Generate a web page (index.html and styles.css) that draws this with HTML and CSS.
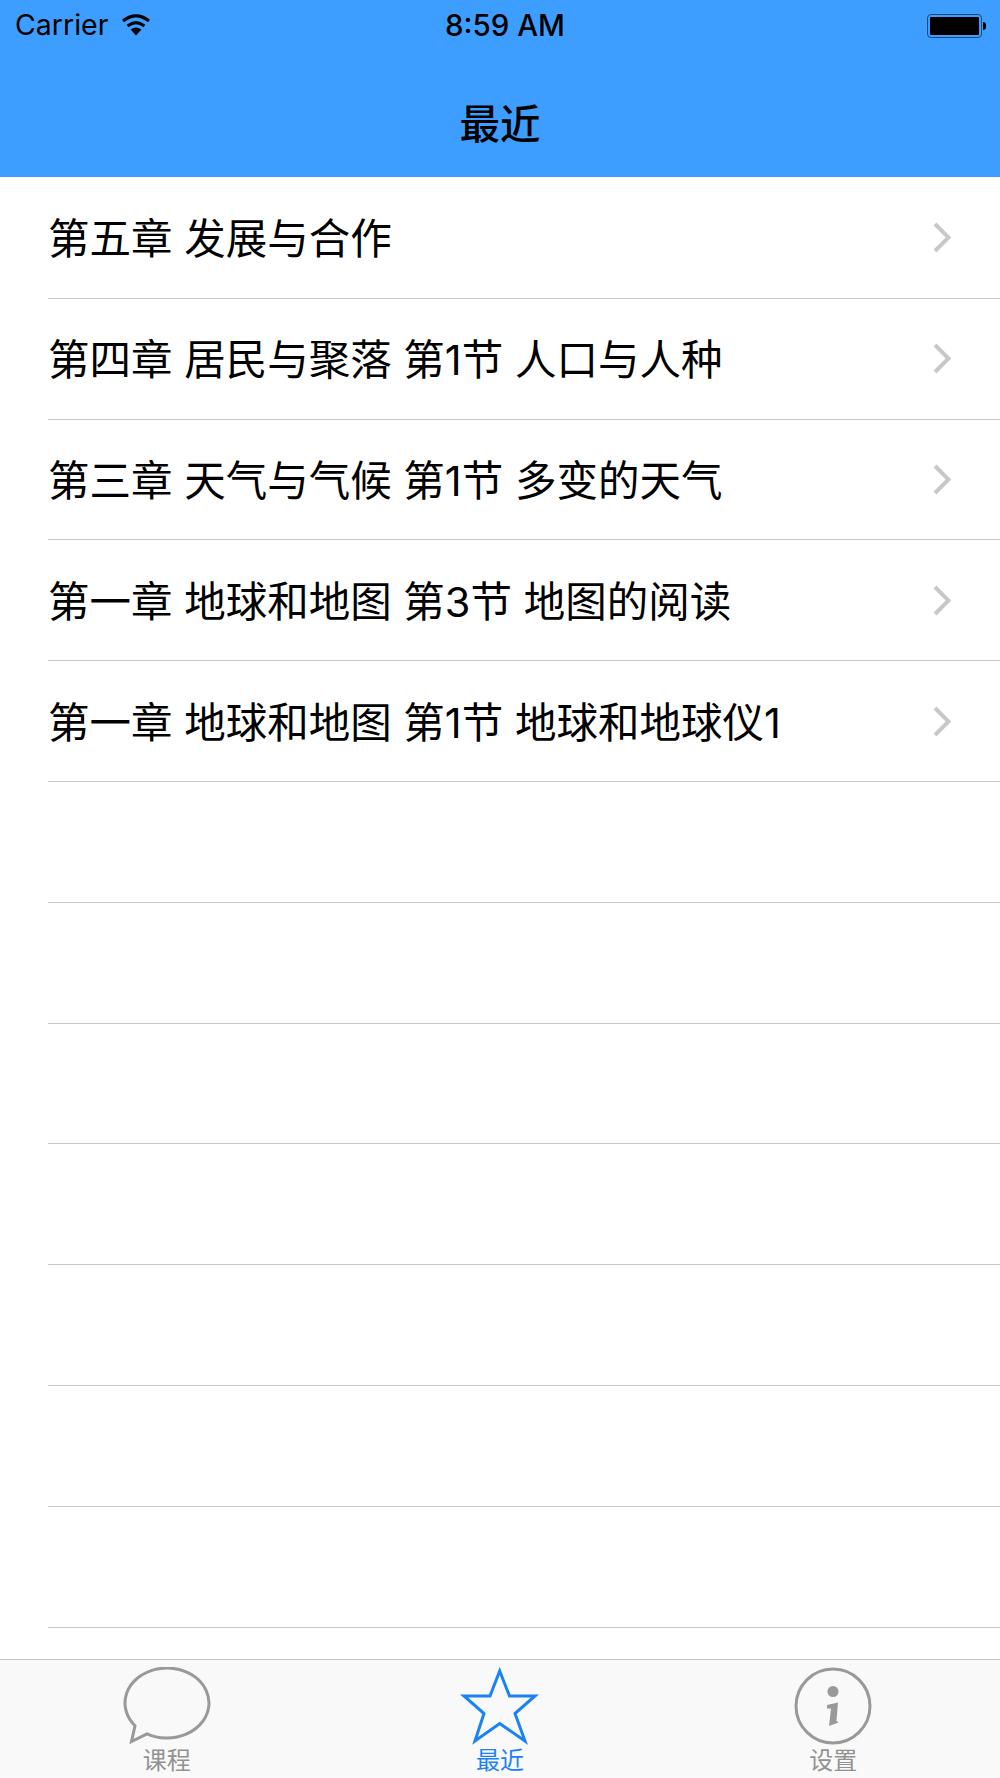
FILE: index.html
```html
<!DOCTYPE html>
<html lang="zh-CN">
<head>
<meta charset="UTF-8">
<title>最近</title>
    <link rel="stylesheet" href="styles.css">
</head>
<body>
<div class="app">
    <header class="header">
        <div class="status">
            <div class="status-left">
                <span>Carrier</span>
                <svg class="wifi" viewBox="0 0 30 22" width="30" height="22">
                    <path d="M15 21.5 L9.6 15.6 Q15 11.6 20.4 15.6 Z" fill="#000"/>
                    <path d="M6.6 12 Q15 5.4 23.4 12" fill="none" stroke="#000" stroke-width="3.2"/>
                    <path d="M2 7 Q15 -3.2 28 7" fill="none" stroke="#000" stroke-width="3.2"/>
                </svg>
            </div>
            <div class="status-time">8:59 AM</div>
            <div class="status-right">
                <div class="battery"><div class="battery-fill"></div></div>
                <div class="battery-nub"></div>
            </div>
        </div>
        <h1 class="title">最近</h1>
    </header>

    <ul class="list">
        <li class="row"><span class="row-text">第五章 发展与合作</span><svg class="chevron" viewBox="0 0 18 31" width="18" height="31"><path d="M2 2 L15.5 15.5 L2 29" fill="none" stroke="#c7c7cc" stroke-width="4"/></svg></li>
        <li class="row"><span class="row-text">第四章 居民与聚落 第1节 人口与人种</span><svg class="chevron" viewBox="0 0 18 31" width="18" height="31"><path d="M2 2 L15.5 15.5 L2 29" fill="none" stroke="#c7c7cc" stroke-width="4"/></svg></li>
        <li class="row"><span class="row-text">第三章 天气与气候 第1节 多变的天气</span><svg class="chevron" viewBox="0 0 18 31" width="18" height="31"><path d="M2 2 L15.5 15.5 L2 29" fill="none" stroke="#c7c7cc" stroke-width="4"/></svg></li>
        <li class="row"><span class="row-text">第一章 地球和地图 第3节 地图的阅读</span><svg class="chevron" viewBox="0 0 18 31" width="18" height="31"><path d="M2 2 L15.5 15.5 L2 29" fill="none" stroke="#c7c7cc" stroke-width="4"/></svg></li>
        <li class="row"><span class="row-text">第一章 地球和地图 第1节 地球和地球仪1</span><svg class="chevron" viewBox="0 0 18 31" width="18" height="31"><path d="M2 2 L15.5 15.5 L2 29" fill="none" stroke="#c7c7cc" stroke-width="4"/></svg></li>
        <li class="row"></li>
        <li class="row"></li>
        <li class="row"></li>
        <li class="row"></li>
        <li class="row"></li>
        <li class="row"></li>
        <li class="row"></li>
    </ul>

    <nav class="tabbar">
        <div class="tab">
            <svg class="tab-icon" viewBox="0 0 88 78" width="88" height="78">
                <path d="M12 58.7 A42 35 0 1 1 24 66.8 L8.5 74.5 Z" fill="none" stroke="#999" stroke-width="3"/>
            </svg>
            <span class="tab-label">课程</span>
        </div>
        <div class="tab tab-active">
            <svg class="tab-icon" viewBox="0 0 80 78" width="80" height="78">
                <path d="M39.7 4 L49.5 29 L75 29 L55 46.5 L65 74 L39.7 56.5 L15 74 L24 46.5 L4 29 L30 29 Z" fill="none" stroke="#1b82f6" stroke-width="3"/>
            </svg>
            <span class="tab-label">最近</span>
        </div>
        <div class="tab">
            <svg class="tab-icon" viewBox="0 0 78 78" width="78" height="78">
                <circle cx="39" cy="39" r="37" fill="none" stroke="#999" stroke-width="3"/>
                <circle cx="39" cy="24.5" r="5.5" fill="#999"/>
                <path d="M33 38 L44 35.5 L42.5 54 L44.5 55.5 L35 59 L37 41.5 L33 41.5 Z" fill="#999"/>
            </svg>
            <span class="tab-label">设置</span>
        </div>
    </nav>
</div>
</body>
</html>
```

FILE: styles.css
```css
html, body {
  margin: 0;
  padding: 0;
}
body {
  font-family: 'Inter', 'Noto Sans CJK SC', sans-serif;
  background-color: #fff;
  color: #000;
}
.app {
  display: flex;
  flex-direction: column;
  width: 1000px;
  height: 1778px;
  overflow: hidden;
}

/* header */
.header {
  flex: none;
  height: 177px;
  background-color: #3d9eff;
  display: flex;
  flex-direction: column;
}
.status {
  height: 53px;
  box-sizing: border-box;
  padding: 0 14px 4px 15px;
  display: grid;
  grid-template-columns: 1fr auto 1fr;
  align-items: center;
  font-size: 28.5px;
}
.status-left {
  display: flex;
  align-items: center;
  gap: 13px;
}
.status-time {
  padding-left: 9px;
  font-size: 29.5px;
  font-weight: 500;
}
.status-right {
  display: flex;
  align-items: center;
  justify-content: flex-end;
  padding-top: 2px;
}
.battery {
  width: 55px;
  height: 24px;
  box-sizing: border-box;
  border: 1px solid #1b4a7d;
  border-radius: 4px;
  padding: 2px;
}
.battery-fill {
  height: 100%;
  background-color: #000;
  border-radius: 1px;
}
.battery-nub {
  width: 3px;
  height: 8px;
  margin-left: 1px;
  background-color: #000;
  border-radius: 0 3px 3px 0;
}
.title {
  flex: 1;
  margin: 0;
  padding-top: 12px;
  display: flex;
  align-items: center;
  justify-content: center;
  font-size: 40.5px;
  font-weight: 500;
}

/* list */
.list {
  flex: 1;
  min-height: 0;
  margin: 0;
  padding: 1px 0 0 48px;
  list-style: none;
  overflow: hidden;
}
.row {
  height: 120.8px;
  box-sizing: border-box;
  border-bottom: 1px solid #c8c7cc;
  padding-right: 49px;
  display: flex;
  align-items: center;
  justify-content: space-between;
}
.row-text {
  padding-bottom: 3px;
  font-size: 41.5px;
  white-space: nowrap;
}
.chevron {
  flex: none;
}

/* tab bar */
.tabbar {
  flex: none;
  height: 119px;
  box-sizing: border-box;
  border-top: 1px solid #c4c4c4;
  background-color: #f9f9f9;
  display: grid;
  grid-template-columns: repeat(3, 1fr);
}
.tab {
  display: flex;
  flex-direction: column;
  align-items: center;
  padding-top: 7px;
  color: #929292;
}
.tab-icon {
  flex: none;
}
.tab-label {
  margin-top: 1px;
  font-size: 24px;
  line-height: 30px;
}
.tab-active {
  color: #1b82f6;
}
```
